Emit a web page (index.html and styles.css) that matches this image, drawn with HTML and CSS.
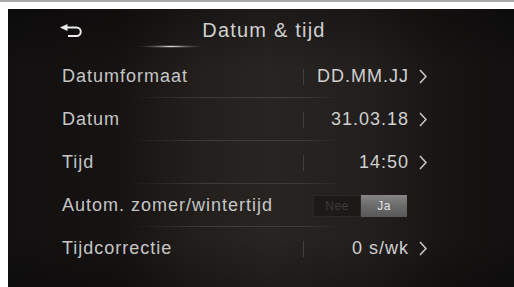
FILE: index.html
```html
<!DOCTYPE html>
<html lang="nl">
<head>
<meta charset="utf-8">
<title>Datum &amp; tijd</title>
<link rel="stylesheet" href="styles.css">
</head>
<body>
<div class="page">
  <div class="screen">
    <header class="header">
      <span class="back">
        <svg width="24" height="14" viewBox="0 0 24 14">
          <polygon points="0,3.5 7.5,0 7.5,7" fill="#ececec"/>
          <path d="M7 3.5 H16.5 A4.25 4.25 0 0 1 16.5 12 H8" fill="none" stroke="#ececec" stroke-width="2"/>
        </svg>
      </span>
      <h1 class="title">Datum &amp; tijd</h1>
      <span></span>
    </header>
    <ul class="list">
      <li class="row">
        <span class="label">Datumformaat</span>
        <span class="divider"></span>
        <span class="value">DD.MM.JJ</span>
        <svg class="chev" width="8" height="15" viewBox="0 0 8 15"><polyline points="1,1 7,7.5 1,14" fill="none" stroke="#c8c8c8" stroke-width="1.6"/></svg>
      </li>
      <li class="row">
        <span class="label">Datum</span>
        <span class="divider"></span>
        <span class="value">31.03.18</span>
        <svg class="chev" width="8" height="15" viewBox="0 0 8 15"><polyline points="1,1 7,7.5 1,14" fill="none" stroke="#c8c8c8" stroke-width="1.6"/></svg>
      </li>
      <li class="row">
        <span class="label">Tijd</span>
        <span class="divider"></span>
        <span class="value">14:50</span>
        <svg class="chev" width="8" height="15" viewBox="0 0 8 15"><polyline points="1,1 7,7.5 1,14" fill="none" stroke="#c8c8c8" stroke-width="1.6"/></svg>
      </li>
      <li class="row">
        <span class="label">Autom. zomer/wintertijd</span>
        <span class="toggle">
          <span class="opt off">Nee</span>
          <span class="opt on">Ja</span>
        </span>
      </li>
      <li class="row last">
        <span class="label">Tijdcorrectie</span>
        <span class="divider"></span>
        <span class="value">0 s/wk</span>
        <svg class="chev" width="8" height="15" viewBox="0 0 8 15"><polyline points="1,1 7,7.5 1,14" fill="none" stroke="#c8c8c8" stroke-width="1.6"/></svg>
      </li>
    </ul>
  </div>
</div>
</body>
</html>
```

FILE: styles.css
```css
html, body {
  margin: 0;
  padding: 0;
  background: #ffffff;
}

.page {
  width: 514px;
  height: 287px;
  box-sizing: border-box;
  border-top: 2px solid #a9a9a9;
  padding: 7px 0 0 8px;
  overflow: hidden;
}

.screen {
  width: 506px;
  height: 278px;
  background:
    linear-gradient(to bottom, rgba(0,0,0,0.3) 0, rgba(0,0,0,0) 60px, rgba(0,0,0,0) 230px, rgba(0,0,0,0.25) 278px),
    linear-gradient(to right, #121010 0, #161312 110px, #221f1d 190px, #282422 260px, #221f1e 360px, #181514 430px, #121010 506px);
  font-family: "Liberation Sans", Arial, sans-serif;
  color: #d2d2d2;
  overflow: hidden;
}

.header {
  position: relative;
  height: 46px;
  display: grid;
  grid-template-columns: 1fr auto 1fr;
  align-items: center;
  padding-bottom: 4px;
  box-sizing: border-box;
}

.header::after {
  content: "";
  position: absolute;
  left: 130px;
  top: 36px;
  width: 66px;
  height: 3px;
  background: radial-gradient(ellipse at center, rgba(235,235,235,0.95) 0, rgba(200,200,200,0.4) 30%, rgba(150,150,150,0) 70%);
}

.back {
  padding-left: 52px;
  display: flex;
  align-items: center;
  padding-top: 2px;
}

.title {
  margin: 0;
  font-size: 20px;
  font-weight: normal;
  letter-spacing: 1.2px;
  color: #d0d0d0;
  transform: translateX(3px);
}

.list {
  list-style: none;
  margin: 0;
  padding: 0;
}

.row {
  height: 43px;
  box-sizing: border-box;
  display: flex;
  align-items: center;
  padding-left: 54px;
  padding-right: 87px;
  background: linear-gradient(to right, rgba(70,66,63,0) 122px, rgba(72,68,65,0.75) 200px, rgba(72,68,65,0.75) 290px, rgba(70,66,63,0) 334px) no-repeat left bottom / 100% 1px;
}

.row.last {
  background: none;
}

.label {
  width: 241px;
  font-size: 18px;
  letter-spacing: 1px;
  color: #c6c6c6;
  white-space: nowrap;
}

.divider {
  width: 1px;
  height: 16px;
  background: #433f3d;
}

.value {
  flex: 1;
  text-align: right;
  padding-right: 10px;
  font-size: 18px;
  letter-spacing: 1px;
  color: #d0d0d0;
  white-space: nowrap;
}

.chev {
  display: block;
}

.toggle {
  display: flex;
  margin-left: 10px;
  padding-top: 1px;
}

.opt {
  height: 22px;
  box-sizing: border-box;
  display: flex;
  align-items: center;
  justify-content: center;
  font-size: 12px;
  letter-spacing: 0.5px;
}

.opt.off {
  width: 48px;
  background: #1c1a19;
  border: 1px solid #2a2726;
  color: #3e3b3a;
}

.opt.on {
  width: 46px;
  background: linear-gradient(to bottom, #858585 0, #6a6a6a 50%, #585858 100%);
  color: #e6e6e6;
}
```
